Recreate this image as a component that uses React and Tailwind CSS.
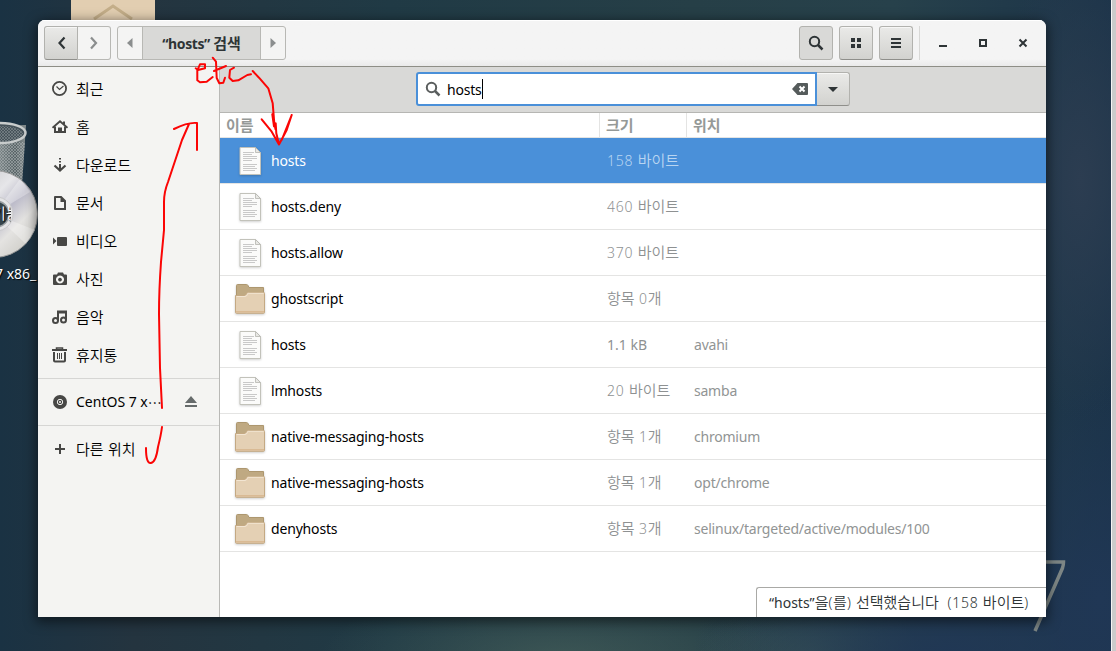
const places = [
  ['clock', '최근'], ['home', '홈'], ['down', '다운로드'], ['doc', '문서'],
  ['video', '비디오'], ['camera', '사진'], ['music', '음악'], ['trash', '휴지통'],
];

const files = [
  ['file', 'hosts', '158 바이트', ''],
  ['file', 'hosts.deny', '460 바이트', ''],
  ['file', 'hosts.allow', '370 바이트', ''],
  ['folder', 'ghostscript', '항목 0개', ''],
  ['file', 'hosts', '1.1 kB', 'avahi'],
  ['file', 'lmhosts', '20 바이트', 'samba'],
  ['folder', 'native-messaging-hosts', '항목 1개', 'chromium'],
  ['folder', 'native-messaging-hosts', '항목 1개', 'opt/chrome'],
  ['folder', 'denyhosts', '항목 3개', 'selinux/targeted/active/modules/100'],
];

// Hangul runs are larger than the Latin around them; digits and
// punctuation beside Hangul are light and loosely spaced.
function Text({ children, className = '', bold = false }) {
  const parts = children.split(/([가-힣]+)/).filter(Boolean);
  return (
    <span className={'whitespace-pre ' + className}>
      {parts.map((p, i) => {
        if (/[가-힣]/.test(p)) {
          return <span key={i} className={"font-['Noto_Sans_CJK_KR',sans-serif] text-[15px] tracking-normal " + (bold ? 'font-bold' : 'font-[350]')}>{p}</span>;
        }
        const loose = !bold && parts.length > 1 && !/[a-z]/i.test(p);
        return <span key={i} className={loose ? 'font-[350] tracking-[0.75px]' : ''}>{p}</span>;
      })}
    </span>
  );
}

function SideIcon({ name }) {
  const shapes = {
    clock: (<g fill="none" stroke="currentColor"><circle cx="7.5" cy="7.5" r="6.600" strokeWidth="1.800" /><path d="M4.500 5.500 7.500 8.500l4-3.500" strokeWidth="1.200" /></g>),
    home: (<g fill="none" stroke="currentColor"><path d="M.5 8.800 8 2.300l7.500 6.500" strokeWidth="1.900" /><path d="M3 7.500V13h4V9.500h2V13h4V7.500" strokeWidth="2" /><path d="M12 2.500v3" strokeWidth="2" /></g>),
    down: (<g><path d="M7 1h2v1.500H7zM7 4h2v1.500H7zM7 7h2v5H7z" /><path d="m2.500 8.500 5.500 5 5.500-5" fill="none" stroke="currentColor" strokeWidth="2.200" /></g>),
    doc: (<path d="M3 1h6.500L14 5.500V15H3q-1 0-1-1V2q0-1 1-1zm1 2v10h8V7H8.500V3z" fillRule="evenodd" />),
    video: (<g><path d="m1 4.500 3.500 3.500L1 11.500z" /><rect x="5" y="4" width="10" height="9" rx="1" /></g>),
    camera: (<path d="M1 4.500q0-1 1-1h3L6 1.500h5l1 2h2q1 0 1 1V13q0 1-1 1H2q-1 0-1-1zM8 4.500a4 4 0 1 0 .01 0zM8 6.700a1.900 1.900 0 1 1-.01 0z" fillRule="evenodd" />),
    music: (<g fill="none" stroke="currentColor" strokeWidth="2"><circle cx="3.500" cy="11.500" r="2.500" /><circle cx="11.500" cy="11" r="2.500" /><path d="M6 11.500V2.500h8V11M6 3.500h8" /></g>),
    trash: (<g fill="none" stroke="currentColor"><path d="M0 3h15" strokeWidth="2" /><path d="M4.500 3V1h6v2" strokeWidth="1.500" /><path d="M2 5v8.500q0 1 1 1h9q1 0 1-1V5" strokeWidth="2" /><path d="M5.500 6v6M7.500 6v6M9.500 6v6" strokeWidth="1" /></g>),
    disc: (<g><circle cx="8" cy="8" r="7" /><circle cx="8" cy="8" r="2.700" fill="none" stroke="#f4f4f2" strokeWidth="1" /><circle cx="8" cy="8" r="1" fill="#f4f4f2" /></g>),
    plus: (<path d="M7 3h2v4h4v2H9v4H7V9H3V7h4z" />),
  };
  return <svg width="16" height="16" viewBox="0 0 16 16" fill="currentColor" className="shrink-0 text-[#474745]">{shapes[name]}</svg>;
}

function FileIcon() {
  return (
    <svg width="32" height="32" viewBox="0 0 32 32" className="drop-shadow-[0_1px_1px_rgba(0,0,0,0.18)]">
      <path d="M6 2.500h15.500l5 5V29.500H6z" fill="#fbfbfa" stroke="#c2c2ba" />
      <path d="M21.500 2.500v5h5z" fill="#e8e8e5" stroke="#b5b5ae" strokeWidth=".8" />
      <path d="M9 7.500h11M9 9.500h9M9 11.500h14M9 13.500h14M9 15.500h9M9 19.500h14M9 21.500h12M9 23.500h14M9 25.500h12" stroke="#c9c9c9" />
    </svg>
  );
}

function FolderIcon() {
  return (
    <svg width="32" height="32" viewBox="0 0 32 32" className="drop-shadow-[0_1px_1px_rgba(0,0,0,0.2)]">
      <path d="M2.500 2.500q0-1 1-1h9q1 0 1.500 1l1 2h14.500v10h-27z" fill="#bfa982" stroke="#ad976f" />
      <path d="M1.500 12.500h9q1 0 2-2t2-1H30q.5 0 .5 1V29.500q0 .8-1 .8h-27q-1 0-1-.8z" fill="#e4d0b4" stroke="#c4a983" />
      <path d="M2.500 13.500h8.500q1.500 0 2.500-2t1.500-1.200h14.500" fill="none" stroke="#f2e5d2" />
      <path d="M2 28.800h28" stroke="#d9b993" strokeWidth="1.500" />
    </svg>
  );
}

function Desktop() {
  return (
    <svg className="absolute inset-0" width="1116" height="651" viewBox="0 0 1116 651">
      <defs>
        <linearGradient id="bg" x1="0" x2="1" y1="0" y2="0">
          <stop offset="0" stopColor="#1a3243" /><stop offset=".12" stopColor="#24343f" /><stop offset=".35" stopColor="#203a45" />
          <stop offset=".62" stopColor="#263f47" /><stop offset=".8" stopColor="#27414b" /><stop offset="1" stopColor="#1b3349" />
        </linearGradient>
        <radialGradient id="green"><stop offset="0" stopColor="#4d675f" /><stop offset="1" stopColor="#4d675f" stopOpacity="0" /></radialGradient>
        <radialGradient id="blue"><stop offset="0" stopColor="#203755" /><stop offset="1" stopColor="#203755" stopOpacity="0" /></radialGradient>
        <radialGradient id="slate"><stop offset="0" stopColor="#2c3d51" /><stop offset="1" stopColor="#2c3d51" stopOpacity="0" /></radialGradient>
        <linearGradient id="cd" x1="0" y1="0" x2="1" y2="1">
          <stop offset="0" stopColor="#b8b8bc" /><stop offset=".4" stopColor="#e6e6e9" /><stop offset=".55" stopColor="#bdbcca" />
          <stop offset=".7" stopColor="#e4e3e1" /><stop offset="1" stopColor="#c2c1ba" />
        </linearGradient>
        <linearGradient id="bin" x1="0" x2="1"><stop offset="0" stopColor="#7b8587" /><stop offset=".6" stopColor="#566265" /><stop offset="1" stopColor="#8a9293" /></linearGradient>
        <pattern id="mesh" width="3" height="3" patternUnits="userSpaceOnUse"><path d="m0 0 3 3M3 0 0 3" stroke="#b0b7b8" strokeWidth=".5" /></pattern>
      </defs>
      <rect width="1116" height="651" fill="url(#bg)" />
      <ellipse cx="1080" cy="180" rx="90" ry="240" fill="url(#slate)" />
      <ellipse cx="560" cy="660" rx="240" ry="80" fill="url(#green)" opacity=".6" />
      <ellipse cx="810" cy="655" rx="110" ry="60" fill="url(#green)" opacity=".5" />
      <ellipse cx="950" cy="660" rx="260" ry="140" fill="url(#blue)" />
      <ellipse cx="1100" cy="600" rx="120" ry="220" fill="url(#blue)" />
      <path d="M1046 562h17.500q0 3-1 6L1035 631" fill="none" stroke="#7d8685" strokeWidth="3.500" />
      <rect x="71" width="84" height="30" fill="#e2ceb1" />
      <path d="M94 19 113 6l19 13" fill="none" stroke="#c4ae89" strokeWidth="3" />
      <path d="M0 125h26l-4 60H0z" fill="url(#bin)" /><path d="M0 142h25l-3 40H0z" fill="url(#mesh)" />
      <ellipse cx="0" cy="133" rx="25.500" ry="10" fill="#46535a" stroke="#c8cccc" strokeWidth="2.500" />
      <ellipse cx="0" cy="134" rx="23" ry="8" fill="url(#mesh)" opacity=".7" />
      <circle cx="-6" cy="214" r="43.500" fill="url(#cd)" stroke="#999" strokeWidth="1" />
      <path d="M-6 214 20 179l10 13zM-6 214 35 230l-9 14z" fill="#fff" opacity=".3" />
      <circle cx="-4" cy="214" r="17" fill="#e4e4e6" stroke="#c9c9cb" /><circle cx="-4" cy="214" r="13" fill="#34434b" stroke="#9aa0a3" strokeWidth="1.500" />
      <rect x="1111" width="1" height="651" fill="#f4f4f4" /><rect x="1112" width="4" height="651" fill="#cbcbcb" />
    </svg>
  );
}

const raised = 'border border-[#b2b2ae] border-b-[#8f8f8b] bg-linear-to-b from-[#eaeae8] to-[#d2d2cf] shadow-[inset_0_1px_0_#f7f7f6]';

export default function App() {
  return (
    <div className="relative h-[651px] w-[1116px] overflow-hidden bg-[#20343f] font-['Noto_Sans','Noto_Sans_CJK_KR',sans-serif] text-[14px] text-black">
      <Desktop />
      <div className="absolute top-[203px] left-[-8px] w-[19px] overflow-hidden text-[15px] leading-[20px] text-white [text-shadow:1px_1px_1px_#000]"><Text>기능</Text></div>
      <div className="absolute top-[264px] left-[-5px] text-[14px] leading-[20px] whitespace-pre text-white [text-shadow:1px_1px_1px_#000]">7 x86_</div>

      <main className="absolute top-[20px] left-[38px] flex h-[597px] w-[1008px] flex-col overflow-hidden rounded-t-[7px] bg-white shadow-[0_3px_12px_2px_rgba(0,0,0,0.5)]">
        <header className="flex h-[47px] shrink-0 items-center border-b border-[#8e8e86] bg-linear-to-b from-[#f4f4f4] from-85% to-[#eaeaea] pl-1.5 text-[#2e3436] shadow-[inset_0_1px_0_#fff]">
          <div className="flex h-[34px] w-[67px]">
            <div className={'flex w-[34px] items-center justify-center rounded-l-[3px] ' + raised}>
              <svg className="ml-px" width="16" height="16" fill="none" stroke="#2e3436" strokeWidth="2.200"><path d="M10.500 2.500 5.500 8l5 5.500" /></svg>
            </div>
            <div className="flex flex-1 items-center justify-center rounded-r-[3px] border border-l-0 border-[#b8b8b4] bg-[#f4f4f3]">
              <svg width="16" height="16" fill="none" stroke="#8b8e8e" strokeWidth="2.200"><path d="m5 2.500 5 5.500-5 5.500" /></svg>
            </div>
          </div>
          <div className="ml-1.5 flex h-[34px] w-[169px] rounded-[3px] border border-[#b8b8b4] bg-[#f4f4f3]">
            <div className="flex w-6 items-center justify-center"><svg width="6" height="10" fill="#8b8e8e"><path d="M5.500 0v10L0 5z" /></svg></div>
            <div className="flex flex-1 items-center justify-center border-x border-[#b8b8b4] bg-[#d9d9d7]"><Text bold className="text-[14px] font-bold tracking-[-0.4px]">“hosts” 검색</Text></div>
            <div className="flex w-6 items-center justify-center"><svg width="6" height="10" fill="#8b8e8e"><path d="M.5 0v10L6 5z" /></svg></div>
          </div>
          <div className="ml-auto flex h-[34px] items-center gap-1.5">
            <div className="flex h-[34px] w-[34px] items-center justify-center rounded-[3px] border border-[#b2b2ae] bg-[#d9d9d7]">
              <svg width="16" height="16" fill="none" stroke="#2e3436"><circle cx="6.500" cy="6.500" r="4.700" strokeWidth="2" /><path d="m10 10 4.500 4.500" strokeWidth="2.500" /></svg>
            </div>
            <div className={'flex h-[34px] w-[34px] items-center justify-center rounded-[3px] ' + raised}>
              <svg width="10" height="10" fill="#2e3436"><path d="M0 0h4v4H0zM6 0h4v4H6zM0 6h4v4H0zM6 6h4v4H6z" /></svg>
            </div>
            <div className={'flex h-[34px] w-[34px] items-center justify-center rounded-[3px] ' + raised}>
              <svg width="10" height="10" fill="#2e3436"><path d="M0 0h10v2H0zM0 4h10v2H0zM0 8h10v2H0z" /></svg>
            </div>
            <div className="h-[34px] w-px bg-[#d8d8d6]" />
          </div>
          <div className="flex w-[126px] items-center gap-[30px] pl-[18px]">
            <svg width="10" height="10" fill="#2e3436"><path d="M1 7h8v2H1z" /></svg>
            <svg width="10" height="10" fill="none" stroke="#2e3436" strokeWidth="2"><path d="M2 2h6v6H2z" /></svg>
            <svg width="10" height="10" fill="none" stroke="#2e3436" strokeWidth="2"><path d="m1.500 1.500 7 7m0-7-7 7" /></svg>
          </div>
        </header>

        <div className="flex min-h-0 flex-1">
          <aside className="flex w-[182px] shrink-0 flex-col border-r border-[#b9b9b6] bg-[#f4f4f2]">
            <nav className="flex h-[312px] flex-col border-b border-[#d6d6d4] pt-[3px]">
              {places.map(([icon, label]) => (
                <div key={label} className="flex h-[38px] items-center gap-2 pl-3.5"><SideIcon name={icon} /><Text>{label}</Text></div>
              ))}
            </nav>
            <div className="flex h-[47px] items-center gap-2 border-b border-[#d6d6d4] pl-3.5">
              <SideIcon name="disc" />
              <div className="flex w-[100px] items-center leading-5"><Text>CentOS 7 x</Text><span className="font-['Noto_Sans_CJK_KR'] leading-5">⋯</span></div>
              <svg width="14" height="12" fill="#666b6b"><path d="M7 0l6 7H1zM1 9h12v2H1z" /></svg>
            </div>
            <div className="flex h-[46px] items-center gap-2 pl-3.5"><SideIcon name="plus" /><Text>다른 위치</Text></div>
          </aside>

          <section className="flex min-w-0 flex-1 flex-col">
            <div className="flex h-[46px] shrink-0 items-start justify-center border-b border-[#b6b6b3] bg-[#d9d9d7] pt-[5px]">
              <div className="flex h-[34px] w-[434px]">
                <div className="flex w-[401px] items-center rounded-l-[3px] border-2 border-[#4a90d9] bg-white pr-[7px] pl-[7px]">
                  <svg width="16" height="16" fill="none" stroke="#5b5f5f"><circle cx="6.500" cy="6.500" r="4.700" strokeWidth="2" /><path d="m10 10 4.500 4.500" strokeWidth="2.500" /></svg>
                  <span className="ml-1.5 tracking-[-0.2px]">hosts</span>
                  <span className="h-5 w-px bg-black" />
                  <svg className="ml-auto" width="16" height="12"><path d="M5.500 0H15q1 0 1 1v10q0 1-1 1H5.500L0 6z" fill="#555b5b" /><path d="m7.500 3.500 5 5m0-5-5 5" stroke="#fff" strokeWidth="2" /></svg>
                </div>
                <div className={'flex flex-1 items-center justify-center rounded-r-[3px] border-l-0 ' + raised}>
                  <svg width="10" height="5" fill="#2e3436"><path d="M0 0h10L5 5z" /></svg>
                </div>
              </div>
            </div>
            <div className="flex h-[25px] shrink-0 items-center border-b border-[#e4e4e3] text-[#959997]">
              <div className="flex h-full w-[380px] items-center border-r border-[#e4e4e3] pl-1.5"><Text bold>이름</Text></div>
              <div className="flex h-full w-[87px] items-center border-r border-[#e4e4e3] pl-1.5"><Text bold>크기</Text></div>
              <div className="pl-1.5"><Text bold>위치</Text></div>
            </div>
            {files.map(([kind, name, size, where], i) => (
              <div key={i} className={'flex h-[46px] shrink-0 items-center border-b border-[#e4e4e3] ' + (i === 0 ? 'bg-[#4a90d9] bg-clip-padding text-white' : '')}>
                <div className="flex w-[387px] items-center gap-[5px] pl-[14px]">
                  {kind === 'file' ? <FileIcon /> : <FolderIcon />}
                  <Text className="tracking-[-0.17px]">{name}</Text>
                </div>
                <div className={'w-[87px] ' + (i === 0 ? 'text-[#b9d5f1]' : 'text-[#8e9192]')}><Text>{size}</Text></div>
                <div className="tracking-[-0.22px] text-[#919494]"><Text>{where}</Text></div>
              </div>
            ))}
            <div className="mt-auto ml-auto flex h-[30px] w-[290px] items-center rounded-tl-[3px] border-t border-l border-[#a9a9a6] bg-white pb-px pl-3 text-[#2e3436]">
              <Text>“hosts”을(를) 선택했습니다  (158 바이트)</Text>
            </div>
          </section>
        </div>
      </main>

      <svg className="pointer-events-none absolute inset-0" width="1116" height="651" fill="none" stroke="#fb0505" strokeWidth="2" strokeLinecap="round" strokeLinejoin="round">
        <path d="M195.700 68.300 198 70l7-1.700v-4h-5l-2.700 6v10l2.700 2 6.700-.6 6-4.700" />
        <path d="m212.700 57.700 3.300 4 .7 16.300 2.600 5.300 4-.6 1.700-5M214 71l12-5" />
        <path d="m234 67.700-4 2.300-.7 7.700 3.400 3.300 5.600-.7 9-5.300 3.700-.7" />
        <path d="m252.700 71 6.300 6.700 9.300 10.600 4.400 15 1.600 20 1.200 6M261.700 119.300l10 12.400 7.300 12.800 7.700-14.500 5-15-10 25M272.300 114.300l1.700 12 1.700-3 .6 10 2.700 11" />
        <path d="M174 129q14-7 23-6v27M189 124l-7 16-14 42q-4 10-4 20v28l-3 32q-2 28-2 52l1 54 2 40M162 427q-1 8-4 20-2 15-7 16t-5-15" />
      </svg>
    </div>
  );
}
